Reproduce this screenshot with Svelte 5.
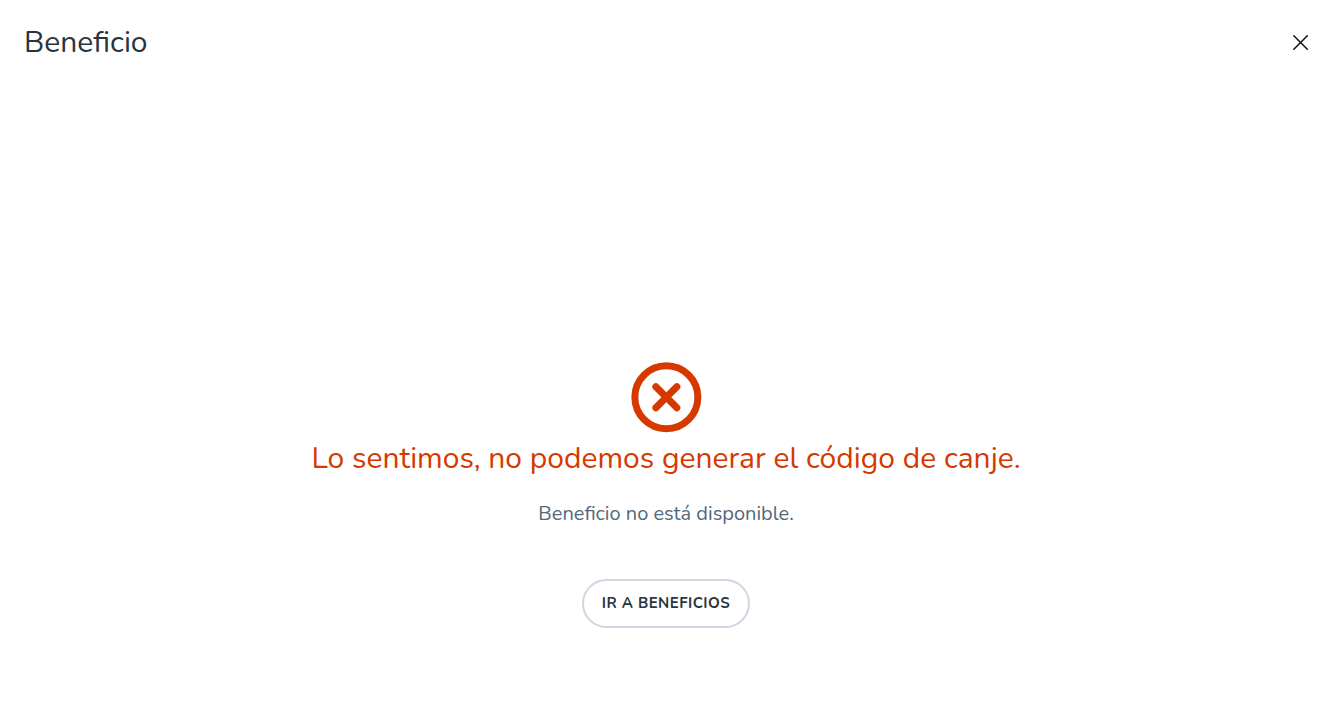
<script lang="ts">
	let open = $state(true);

	function close() {
		open = false;
	}
</script>

<svelte:head>
	<title>Beneficio</title>
</svelte:head>

{#if open}
	<div class="page">
		<header>
			<h1>Beneficio</h1>
			<button class="close" type="button" aria-label="Cerrar" onclick={close}>
				<svg viewBox="0 0 16 16" width="16" height="16" aria-hidden="true">
					<path d="M1.8.8l13.5 13.5M15.3.8L1.8 14.3" />
				</svg>
			</button>
		</header>

		<main>
			<svg class="status" viewBox="0 0 24 24" width="84" height="84" aria-hidden="true">
				<circle cx="12.1" cy="12.05" r="9" />
				<path d="M9.1 9.05l6 6M15.1 9.05l-6 6" />
			</svg>
			<h2>Lo sentimos, no podemos generar el código de canje.</h2>
			<p>Beneficio no está disponible.</p>
			<button class="action" type="button" onclick={close}>IR A BENEFICIOS</button>
		</main>
	</div>
{/if}

<style>
	:global(body) {
		margin: 0;
		background: #fff;
		color: #28353f;
		font-family: Nunito, Lato, sans-serif;
	}

	.page {
		min-height: 100vh;
		box-sizing: border-box;
		padding-right: 6px;
	}

	header {
		display: flex;
		align-items: center;
		justify-content: space-between;
		padding: 23px 24px 21px;
	}

	h1,
	h2 {
		margin: 0;
		font-size: 30px;
		line-height: 40px;
		font-weight: 400;
	}

	.close {
		display: flex;
		padding: 0;
		border: none;
		background: none;
		cursor: pointer;
	}

	.close path {
		fill: none;
		stroke: #111;
		stroke-width: 1.5;
		stroke-linecap: round;
	}

	main {
		display: flex;
		flex-direction: column;
		align-items: center;
		padding: 271px 24px 24px;
		text-align: center;
	}

	.status {
		fill: none;
		stroke: #d63900;
		stroke-width: 2;
		stroke-linecap: round;
	}

	h2 {
		color: #d63900;
	}

	p {
		margin: 20px 0 50px;
		font-size: 20px;
		line-height: 30px;
		color: #53687d;
	}

	.action {
		height: 49px;
		padding: 0 18px 1px;
		border: 2px solid #cdd7e2;
		border-radius: 25px;
		background: #fff;
		color: #28353f;
		font-family: inherit;
		font-size: 15px;
		font-weight: 700;
		letter-spacing: 0.03em;
		cursor: pointer;
	}
</style>
